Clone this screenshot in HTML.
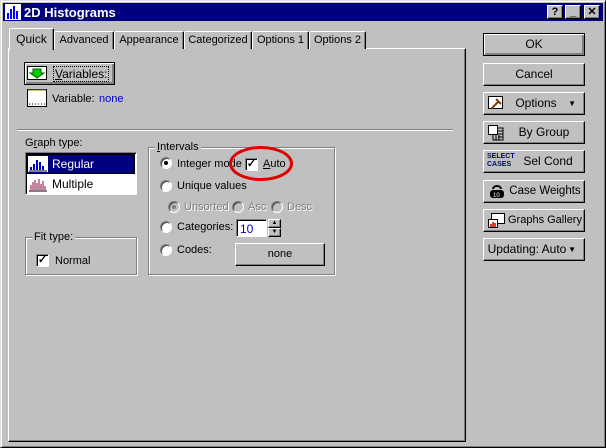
<!DOCTYPE html>
<html><head><style>
*{box-sizing:border-box;margin:0;padding:0}
body{width:606px;height:448px;background:#c0c0c0;font-family:"Liberation Sans",sans-serif;font-size:11px;color:#000;position:relative;overflow:hidden}
span{white-space:nowrap}
.a{position:absolute}
.win{left:0;top:0;width:606px;height:448px;border:1px solid;border-color:#dfdfdf #000 #000 #dfdfdf;box-shadow:inset 1px 1px #fff,inset -1px -1px #808080}
.title{left:3px;top:3px;width:600px;height:18px;background:#000080;color:#fff;font-weight:bold;font-size:12px}
.tb{width:16px;height:14px;top:5px;background:#c0c0c0;border:1px solid;border-color:#fff #000 #000 #fff;box-shadow:inset -1px -1px #808080;color:#000;font-weight:bold;font-size:11px;text-align:center;line-height:12px}
.raised{border:1px solid;border-color:#fff #000 #000 #fff;box-shadow:inset -1px -1px #808080;background:#c0c0c0}
.sunk{border:1px solid;border-color:#808080 #fff #fff #808080;box-shadow:inset 1px 1px #000}
.grp{border:1px solid #808080;box-shadow:1px 1px #fff,inset 1px 1px #fff}
.gl{background:#c0c0c0;padding:0 2px;top:-7px;left:6px}
.tab{top:31px;height:18px;border:1px solid;border-color:#fff #000 transparent #fff;border-bottom:none;box-shadow:inset -1px 0 #808080;border-radius:2px 2px 0 0;text-align:center;line-height:16px;background:#c0c0c0;font-size:11px;white-space:nowrap}
.rad{width:12px;height:12px;border-radius:50%;background:#fff;border:1px solid;border-color:#808080 #fff #fff #808080;box-shadow:inset 1px 1px #404040}
.chk{width:13px;height:13px;background:#fff;border:1px solid;border-color:#808080 #fff #fff #808080;box-shadow:inset 1px 1px #000;font-size:11px;line-height:10px;text-align:center;font-weight:bold}
.btn{left:483px;width:102px;height:23px;text-align:center;line-height:21px;font-size:12px}
.btn .t{position:absolute;left:22px;right:2px;top:0;text-align:center;white-space:nowrap}
</style></head><body>
<div class="a win"></div>
<div class="a title">
 <svg class="a" style="left:2px;top:1px" width="16" height="16"><rect width="16" height="16" fill="#fff"/><rect x="2" y="9" width="2" height="6" fill="#00f"/><rect x="5" y="5" width="2" height="10" fill="#00f"/><rect x="8" y="2" width="2" height="13" fill="#00f"/><rect x="11" y="7" width="2" height="8" fill="#00f"/></svg>
 <span class="a" style="left:21px;top:2px;font-size:13px">2D Histograms</span>
</div>
<div class="a tb" style="left:547px">?</div>
<div class="a tb" style="left:565px">_</div>
<div class="a tb" style="left:584px">✕</div>

<div class="a raised" style="left:8px;top:48px;width:458px;height:394px;border-color:#fff #000 #000 #fff"></div>
<div class="a tab" style="left:9px;top:28px;width:45px;height:22px;font-size:12px;z-index:2;line-height:20px">Quick</div>
<div class="a tab" style="left:54px;width:60px">Advanced</div>
<div class="a tab" style="left:114px;width:70px">Appearance</div>
<div class="a tab" style="left:184px;width:68px">Categorized</div>
<div class="a tab" style="left:252px;width:57px">Options 1</div>
<div class="a tab" style="left:309px;width:57px">Options 2</div>

<div class="a raised" style="left:24px;top:62px;width:91px;height:23px;border:1px solid #000;box-shadow:inset 1px 1px #fff,inset -1px -1px #808080,inset -2px -2px #808080"></div>
<svg class="a" style="left:27px;top:66px" width="20" height="15"><rect x="0.5" y="0.5" width="19" height="13" fill="#fff" stroke="#000"/><path d="M6 3h8v4h3l-7 5-7-5h3z" fill="#0c0" stroke="#060"/></svg>
<span class="a" style="left:53px;top:66px;font-size:12px;border:1px dotted #000;padding:0 1px"><u>V</u>ariables:</span>
<svg class="a" style="left:27px;top:89px" width="20" height="18"><rect x="0.5" y="0.5" width="19" height="17" fill="#fff" stroke="#000"/><path d="M1 1H19" stroke="#808000"/><path d="M2 15h16" stroke="#000" stroke-dasharray="1 2"/></svg>
<span class="a" style="left:52px;top:93px">Variable:</span>
<span class="a" style="left:99px;top:93px;color:#00c">none</span>
<div class="a" style="left:17px;top:129px;width:436px;height:2px;border-top:1px solid #808080;border-bottom:1px solid #fff"></div>

<span class="a" style="left:25px;top:137px">G<u>r</u>aph type:</span>
<div class="a sunk" style="left:25px;top:152px;width:112px;height:43px;background:#fff"></div>
<div class="a" style="left:27px;top:154px;width:108px;height:20px;background:#000080;border:1px solid #000"></div>
<svg class="a" style="left:28px;top:156px" width="20" height="16"><rect width="20" height="16" fill="#fff"/><path d="M3 14V11M6 14V8M9 14V4M12 14V6M15 14V10" stroke="#00c" stroke-width="2"/><path d="M1 15H19" stroke="#000"/></svg>
<span class="a" style="left:52px;top:157px;color:#fff;font-size:12px">Regular</span>
<svg class="a" style="left:28px;top:176px" width="20" height="16"><path d="M3 14V9M5 14V6M7 14V4M9 14V7M11 14V3M13 14V8M15 14V5M17 14V10" stroke="#a03060" stroke-width="1.2"/><path d="M1 15H19" stroke="#000"/></svg>
<span class="a" style="left:52px;top:177px;font-size:12px">Multiple</span>

<div class="a grp" style="left:25px;top:237px;width:112px;height:38px"><span class="a gl">Fit type:</span></div>
<div class="a chk" style="left:36px;top:254px">✓</div>
<span class="a" style="left:55px;top:255px">Normal</span>

<div class="a grp" style="left:148px;top:147px;width:187px;height:128px"><span class="a gl"><u>I</u>ntervals</span></div>
<div class="a rad" style="left:160px;top:157px"><div class="a" style="left:3px;top:3px;width:4px;height:4px;background:#000;border-radius:50%"></div></div>
<span class="a" style="left:177px;top:158px">Integer mode</span>
<div class="a chk" style="left:245px;top:158px">✓</div>
<span class="a" style="left:263px;top:158px"><u>A</u>uto</span>
<div class="a" style="left:229px;top:146px;width:64px;height:35px;border:3px solid #e00000;border-radius:50%"></div>
<div class="a rad" style="left:160px;top:180px"></div>
<span class="a" style="left:177px;top:180px">Unique values</span>
<div class="a rad" style="left:168px;top:201px;background:#c0c0c0"><div class="a" style="left:3px;top:3px;width:4px;height:4px;background:#808080;border-radius:50%"></div></div>
<span class="a" style="left:184px;top:201px;color:#808080;text-shadow:1px 1px #fff">Unsorted</span>
<div class="a rad" style="left:232px;top:201px;background:#c0c0c0"></div>
<span class="a" style="left:248px;top:201px;color:#808080;text-shadow:1px 1px #fff">Asc</span>
<div class="a rad" style="left:271px;top:201px;background:#c0c0c0"></div>
<span class="a" style="left:287px;top:201px;color:#808080;text-shadow:1px 1px #fff">Desc</span>
<div class="a rad" style="left:160px;top:221px"></div>
<span class="a" style="left:177px;top:221px">Categories:</span>
<div class="a sunk" style="left:236px;top:219px;width:31px;height:18px;background:#fff;color:#00c;padding:2px 0 0 3px;font-size:12px">10</div>
<div class="a raised" style="left:268px;top:219px;width:13px;height:9px;font-size:6px;line-height:6px;text-align:center">▲</div>
<div class="a raised" style="left:268px;top:228px;width:13px;height:9px;font-size:6px;line-height:6px;text-align:center">▼</div>
<div class="a rad" style="left:160px;top:244px"></div>
<span class="a" style="left:177px;top:244px">Codes:</span>
<div class="a raised" style="left:235px;top:243px;width:90px;height:23px;text-align:center;line-height:21px">none</div>

<div class="a raised btn" style="top:33px;border:1px solid #000;box-shadow:inset 1px 1px #fff,inset -1px -1px #808080,inset -2px -2px #808080">OK</div>
<div class="a raised btn" style="top:63px">Cancel</div>
<div class="a raised btn" style="top:92px"><svg class="a" style="left:4px;top:3px" width="16" height="16"><rect x="0.5" y="0.5" width="14" height="12" fill="#fff" stroke="#000"/><path d="M3 13L11 5M8 3l5 5" stroke="#804000" stroke-width="2"/></svg><span class="t" style="right:18px">Options</span><span class="a" style="right:8px;top:0;font-size:8px">▼</span></div>
<div class="a raised btn" style="top:121px"><svg class="a" style="left:4px;top:3px" width="16" height="16"><rect x="0.5" y="0.5" width="9" height="9" fill="#fff" stroke="#000"/><path d="M10 3h5v12H5v-5" fill="none" stroke="#000"/><path d="M10 6h5M10 9h5M10 12h5M8 10v5M11 10v5" stroke="#000"/></svg><span class="t">By Group</span></div>
<div class="a raised btn" style="top:150px"><span class="a" style="left:3px;top:2px;font-size:7px;line-height:8px;color:#00008b;font-weight:bold;text-align:left">SELECT<br>CASES</span><span class="t" style="left:30px">Sel Cond</span></div>
<div class="a raised btn" style="top:180px"><svg class="a" style="left:5px;top:4px" width="16" height="14"><path d="M4 4a4 3 0 0 1 8 0" fill="none" stroke="#000" stroke-width="2"/><rect x="1" y="5" width="14" height="8" rx="3" fill="#000"/><text x="4" y="12" font-size="6" fill="#fff" font-family="Liberation Sans">10</text></svg><span class="t" style="left:24px;font-size:11.5px">Case Weights</span></div>
<div class="a raised btn" style="top:209px"><svg class="a" style="left:4px;top:3px" width="18" height="16"><rect x="3.5" y="0.5" width="13" height="10" fill="#fff" stroke="#000"/><rect x="0.5" y="6.5" width="9" height="8" fill="#fff" stroke="#000"/><path d="M3 14V11M5 14V9M7 14V10" stroke="#c00" stroke-width="1.5"/></svg><span class="t" style="left:24px;font-size:11px">Graphs Gallery</span></div>
<div class="a raised btn" style="top:238px"><span style="margin-left:-14px">Updating: Auto</span><span class="a" style="right:8px;top:0;font-size:8px">▼</span></div>
</body></html>
